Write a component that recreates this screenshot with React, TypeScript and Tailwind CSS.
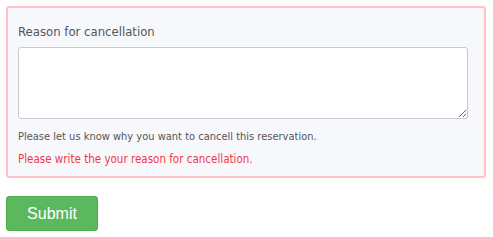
import React from 'react';

const App = () => {
  return (
    <div className="w-[493px] h-[237px] bg-white p-[6px] font-['DejaVu_Sans_Condensed','DejaVu_Sans',sans-serif]">
      {/* Reason panel */}
      <div className="w-[480px] h-[172px] rounded-[3px] border-2 border-[#fdc3c6] bg-[#f7f8fc] px-[10px] pt-[15px]">
        <label className="block text-[13px] leading-[18px] text-[#555]">Reason for cancellation</label>
        <textarea className="mt-[6px] block w-[450px] h-[72px] rounded-[3px] border border-[#c9c9cd] bg-white" />
        <p className="mt-[11px] text-[11px] leading-[14px] text-[#555]">
          Please let us know why you want to cancell this reservation.
        </p>
        <p className="mt-[7px] text-[11.5px] leading-[16px] text-[#f0384a]">
          Please write the your reason for cancellation.
        </p>
      </div>

      <button className="mt-[18px] w-[92px] h-[35px] rounded-[3px] border border-[#4cae4c] bg-[#5cb85c] text-[16px] text-white font-['Liberation_Sans',sans-serif]">
        Submit
      </button>
    </div>
  );
};

export default App;
